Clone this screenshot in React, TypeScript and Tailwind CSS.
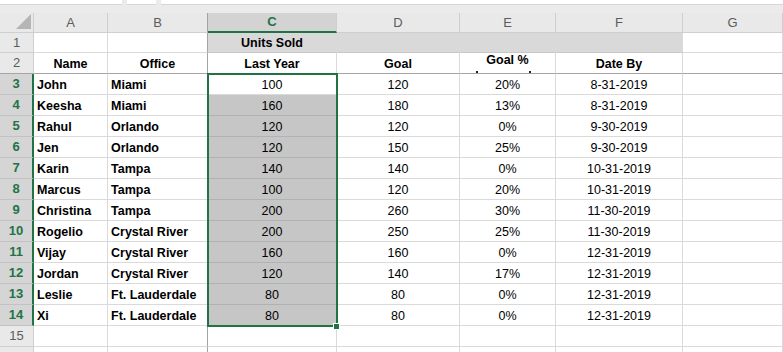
import React from "react";

const data: string[][] = [
  ["John", "Miami", "100", "120", "20%", "8-31-2019"],
  ["Keesha", "Miami", "160", "180", "13%", "8-31-2019"],
  ["Rahul", "Orlando", "120", "120", "0%", "9-30-2019"],
  ["Jen", "Orlando", "120", "150", "25%", "9-30-2019"],
  ["Karin", "Tampa", "140", "140", "0%", "10-31-2019"],
  ["Marcus", "Tampa", "100", "120", "20%", "10-31-2019"],
  ["Christina", "Tampa", "200", "260", "30%", "11-30-2019"],
  ["Rogelio", "Crystal River", "200", "250", "25%", "11-30-2019"],
  ["Vijay", "Crystal River", "160", "160", "0%", "12-31-2019"],
  ["Jordan", "Crystal River", "120", "140", "17%", "12-31-2019"],
  ["Leslie", "Ft. Lauderdale", "80", "80", "0%", "12-31-2019"],
  ["Xi", "Ft. Lauderdale", "80", "80", "0%", "12-31-2019"],
];

function DataRow({ n, row }: { n: number; row: string[] }) {
  const active = n === 3;
  return (
    <div className="flex h-[21px]">
      <div className="flex w-[34px] items-center justify-center border-b border-r-2 border-b-[#c2c2c2] border-r-[#217346] bg-[#d5d5d5] text-[13px] font-bold text-[#217346]">
        {n}
      </div>
      <div className="flex w-[74px] items-end border-b border-r border-[#dadada] pb-[1px] pl-[3px] font-bold leading-[15px]">
        {row[0]}
      </div>
      <div className="flex w-[100px] items-end border-b border-r border-b-[#dadada] border-r-[#a3a3a3] pb-[1px] pl-[3px] font-bold leading-[15px]">
        {row[1]}
      </div>
      <div
        className={
          active
            ? "flex w-[129px] items-end justify-center border-b border-r border-[#dadada] bg-white pb-[1px] leading-[15px]"
            : "flex w-[129px] items-end justify-center border-b border-r border-[#b2b2b2] bg-[#c6c6c6] pb-[1px] leading-[15px]"
        }
      >
        {row[2]}
      </div>
      <div className="flex w-[123px] items-end justify-center border-b border-r border-[#dadada] pb-[1px] leading-[15px]">
        {row[3]}
      </div>
      <div className="flex w-[96px] items-end justify-center border-b border-r border-[#dadada] pb-[1px] leading-[15px]">
        {row[4]}
      </div>
      <div className="flex w-[127px] items-end justify-center border-b border-r border-[#dadada] pb-[1px] leading-[15px]">
        {row[5]}
      </div>
      <div className="w-[100px] border-b border-r border-[#dadada]" />
    </div>
  );
}

function EmptyRow({ n }: { n?: number }) {
  return (
    <div className="flex h-[21px]">
      <div className="flex w-[34px] items-center justify-center border-b border-r border-[#cfcfcf] bg-[#e9e9e9] text-[13px] text-[#5c5c5c]">
        {n}
      </div>
      <div className="w-[74px] border-b border-r border-[#dadada]" />
      <div className="w-[100px] border-b border-r border-b-[#dadada] border-r-[#a3a3a3]" />
      <div className="w-[129px] border-b border-r border-[#dadada]" />
      <div className="w-[123px] border-b border-r border-[#dadada]" />
      <div className="w-[96px] border-b border-r border-[#dadada]" />
      <div className="w-[127px] border-b border-r border-[#dadada]" />
      <div className="w-[100px] border-b border-r border-[#dadada]" />
    </div>
  );
}

export default function App() {
  return (
    <div className="relative h-[352px] w-[783px] overflow-hidden bg-white font-['Liberation_Sans',Arial,Helvetica,sans-serif] text-[12.5px] text-black">
      {/* top strip */}
      <div className="flex h-[13px] gap-[5px] bg-[#ebebeb]">
        <div className="h-[5px] w-[122px] border-b border-[#d6d6d6] bg-white" />
        <div className="h-[5px] w-[29px] border-b border-[#d6d6d6] bg-white" />
        <div className="h-[5px] flex-1 border-b border-[#d6d6d6] bg-white" />
      </div>

      {/* column headers */}
      <div className="flex h-[20px] bg-[#e9e9e9] text-[13px] text-[#5c5c5c]">
        <div className="flex w-[34px] items-end justify-end border-b border-r border-[#cfcfcf] pb-[3px] pr-[2px]">
          <svg width="15" height="15" viewBox="0 0 15 15">
            <polygon points="15,0 15,15 0,15" fill="#b5b5b5" />
          </svg>
        </div>
        <div className="flex w-[74px] items-center justify-center border-b border-r border-[#cfcfcf]">A</div>
        <div className="flex w-[100px] items-center justify-center border-b border-r border-b-[#cfcfcf] border-r-[#a3a3a3]">B</div>
        <div className="flex w-[129px] items-center justify-center border-b-2 border-r border-b-[#217346] border-r-[#cfcfcf] bg-[#d3d3d3] font-bold text-[#217346]">C</div>
        <div className="flex w-[123px] items-center justify-center border-b border-r border-[#cfcfcf]">D</div>
        <div className="flex w-[96px] items-center justify-center border-b border-r border-[#cfcfcf]">E</div>
        <div className="flex w-[127px] items-center justify-center border-b border-r border-[#cfcfcf]">F</div>
        <div className="flex w-[100px] items-center justify-center border-b border-r border-[#cfcfcf]">G</div>
      </div>

      {/* row 1 */}
      <div className="flex h-[20px]">
        <div className="flex w-[34px] items-center justify-center border-b border-r border-[#cfcfcf] bg-[#e9e9e9] text-[13px] text-[#5c5c5c]">1</div>
        <div className="w-[74px] border-b border-r border-[#dadada]" />
        <div className="w-[100px] border-b border-r border-b-[#dadada] border-r-[#a3a3a3]" />
        <div className="flex w-[129px] items-end justify-center border-b border-r border-b-[#c8c8c8] border-r-transparent bg-[#d9d9d9] pb-[1px] font-bold leading-[15px]">
          Units Sold
        </div>
        <div className="w-[123px] border-b border-r border-b-[#c8c8c8] border-r-transparent bg-[#d9d9d9]" />
        <div className="w-[96px] border-b border-r border-b-[#c8c8c8] border-r-transparent bg-[#d9d9d9]" />
        <div className="w-[127px] border-b border-r border-b-[#c8c8c8] border-r-[#dadada] bg-[#d9d9d9]" />
        <div className="w-[100px] border-b border-r border-[#dadada]" />
      </div>

      {/* row 2 */}
      <div className="flex h-[21px]">
        <div className="flex w-[34px] items-center justify-center border-b border-r border-b-[#a5a5a5] border-r-[#cfcfcf] bg-[#e9e9e9] text-[13px] text-[#5c5c5c]">2</div>
        <div className="flex w-[74px] items-end justify-center border-b border-r border-b-[#a5a5a5] border-r-[#dadada] pb-[1px] font-bold leading-[15px]">Name</div>
        <div className="flex w-[100px] items-end justify-center border-b border-r border-b-[#a5a5a5] border-r-[#a3a3a3] pb-[1px] font-bold leading-[15px]">Office</div>
        <div className="flex w-[129px] items-end justify-center border-b border-r border-b-[#a5a5a5] border-r-[#dadada] pb-[1px] font-bold leading-[15px]">Last Year</div>
        <div className="flex w-[123px] items-end justify-center border-b border-r border-b-[#a5a5a5] border-r-[#dadada] pb-[1px] font-bold leading-[15px]">Goal</div>
        <div className="flex w-[96px] flex-col items-center justify-end border-b border-r border-b-[#a5a5a5] border-r-[#dadada]">
          <span className="font-bold leading-[14px]">Goal %</span>
          <div className="mr-[8px] mt-[4px] flex h-[2px] w-[55px] justify-between">
            <span className="h-[2px] w-[2px] bg-[#222]" />
            <span className="h-[2px] w-[2px] bg-[#222]" />
          </div>
        </div>
        <div className="flex w-[127px] items-end justify-center border-b border-r border-b-[#a5a5a5] border-r-[#dadada] pb-[1px] font-bold leading-[15px]">Date By</div>
        <div className="w-[100px] border-b border-r border-b-[#a5a5a5] border-r-[#dadada]" />
      </div>

      {data.map((row, i) => (
        <DataRow key={i} n={i + 3} row={row} />
      ))}
      <EmptyRow n={15} />
      <EmptyRow />

      {/* selection outline */}
      <div className="pointer-events-none absolute left-[207px] top-[73px] h-[254px] w-[131px] border-2 border-[#217346]" />
      {/* fill handle */}
      <div className="pointer-events-none absolute left-[333px] top-[323px] h-[7px] w-[7px] border border-white bg-[#217346]" />
    </div>
  );
}
